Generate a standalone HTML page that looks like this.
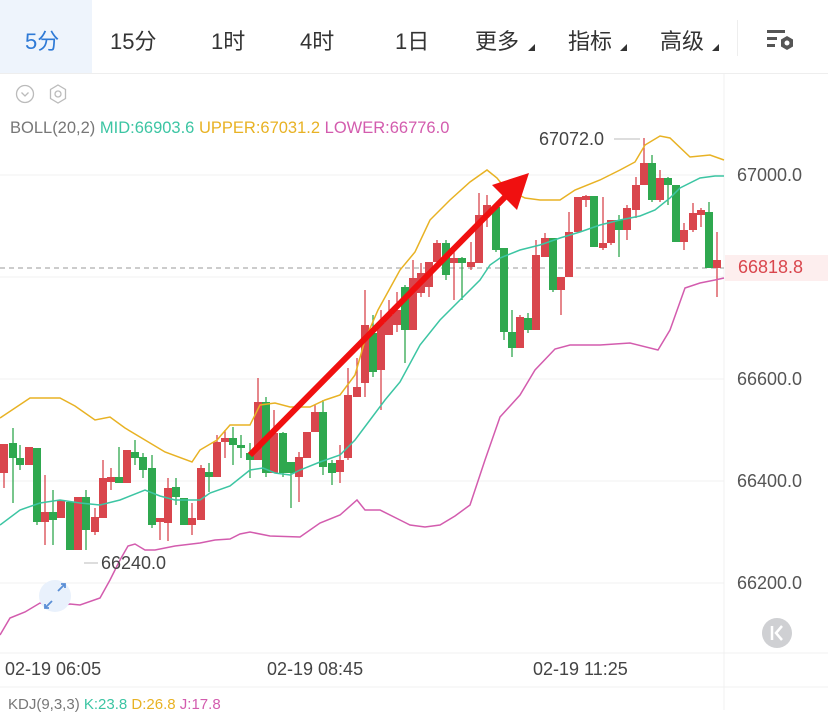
<!DOCTYPE html><html><head><meta charset="utf-8"><style>
body{margin:0;width:828px;height:710px;overflow:hidden;background:#fff;font-family:"Liberation Sans","Noto Sans CJK SC",sans-serif;position:relative}
.tab{position:absolute;top:24px;font-size:22px;color:#333}
.tri{position:absolute;width:0;height:0;border-left:7px solid transparent;border-bottom:7px solid #333}
.ax{position:absolute;font-size:18px;color:#555}
</style></head><body>
<div style="position:absolute;left:0;top:0;width:92px;height:73px;background:#eef4fc"></div>
<div style="position:absolute;left:0;top:73px;width:828px;height:1px;background:#eee"></div>
<div class="tab" style="left:25px;color:#2f7ad6">5分</div>
<div class="tab" style="left:110px">15分</div>
<div class="tab" style="left:211px">1时</div>
<div class="tab" style="left:300px">4时</div>
<div class="tab" style="left:395px">1日</div>
<div class="tab" style="left:475px">更多</div><div class="tri" style="left:528px;top:44px"></div>
<div class="tab" style="left:568px">指标</div><div class="tri" style="left:620px;top:44px"></div>
<div class="tab" style="left:660px">高级</div><div class="tri" style="left:712px;top:44px"></div>
<div style="position:absolute;left:737px;top:20px;width:1px;height:36px;background:#eee"></div>
<svg style="position:absolute;left:766px;top:28px" width="32" height="26"><g fill="#555"><rect x="1" y="2" width="18" height="3"/><rect x="1" y="9" width="10" height="3"/><rect x="1" y="16" width="8" height="3"/></g><polygon points="21,8 27,11.5 27,18.5 21,22 15,18.5 15,11.5" fill="#555"/><circle cx="21" cy="15" r="2.5" fill="#fff"/></svg>
<svg style="position:absolute;left:14px;top:84px" width="60" height="22"><circle cx="11" cy="10" r="8.5" fill="none" stroke="#bbb" stroke-width="1.3"/><path d="M7.5 8.5l3.5 3.5 3.5-3.5" fill="none" stroke="#bbb" stroke-width="1.3"/><polygon points="44,1 51.5,5.5 51.5,14.5 44,19 36.5,14.5 36.5,5.5" fill="none" stroke="#bbb" stroke-width="1.3"/><circle cx="44" cy="10" r="3" fill="none" stroke="#bbb" stroke-width="1.3"/></svg>
<div style="position:absolute;left:10px;top:119px;font-size:16.5px;white-space:nowrap"><span style="color:#777">BOLL(20,2)</span> <span style="color:#3cc5a3">MID:66903.6</span> <span style="color:#e8b224">UPPER:67031.2</span> <span style="color:#d35cae">LOWER:66776.0</span></div>
<svg style="position:absolute;left:0;top:0" width="828" height="710" id="c">
<g stroke="#f1f1f1" stroke-width="1"><line x1="0" y1="175" x2="724" y2="175"/><line x1="0" y1="277" x2="724" y2="277"/><line x1="0" y1="379" x2="724" y2="379"/><line x1="0" y1="481" x2="724" y2="481"/><line x1="0" y1="583" x2="724" y2="583"/><line x1="0" y1="653" x2="828" y2="653"/><line x1="0" y1="687" x2="828" y2="687"/><line x1="724" y1="74" x2="724" y2="710"/></g>
<line x1="0" y1="268" x2="724" y2="268" stroke="#999" stroke-dasharray="5,4"/>
<g id="k"></g>
<polyline fill="none" stroke="#e8b224" stroke-width="1.5" points="0,418 30,398 60,398 75,406 95,420 110,417 125,428 145,440 165,452 192,462 200,450 217,440 230,425 250,425 260,405 275,403 290,407 310,407 325,400 340,395 355,375 365,340 378,310 400,270 415,252 430,220 450,200 470,182 487,170 497,178 505,188 525,198 540,200 560,200 575,190 600,180 620,170 635,162 645,145 660,136 670,138 690,157 710,155 724,160"/>
<polyline fill="none" stroke="#3cc5a3" stroke-width="1.5" points="0,525 20,510 40,503 60,500 80,503 100,505 120,500 145,490 160,496 175,500 200,500 210,493 230,486 250,470 263,468 275,473 290,475 300,470 320,462 340,455 355,440 370,420 385,400 400,382 420,345 440,320 460,300 480,280 490,265 500,258 520,250 540,245 560,238 580,232 600,225 620,220 640,216 655,210 670,198 680,188 700,178 715,176 724,176"/>
<polyline fill="none" stroke="#d35cae" stroke-width="1.5" points="0,635 10,618 25,612 40,603 55,607 70,604 80,605 100,598 110,580 120,560 128,546 135,544 145,550 155,550 175,546 200,543 215,540 230,539 240,534 250,532 270,536 300,537 320,523 340,515 357,500 365,510 380,510 400,520 410,525 425,527 440,525 455,516 470,505 485,460 500,417 520,395 535,370 555,349 570,345 600,345 630,343 658,350 670,330 685,288 700,283 715,280 724,278"/>
<line x1="250" y1="455" x2="505" y2="197" stroke="#f01010" stroke-width="6"/>
<polygon points="529,173 492,185 517,210" fill="#f01010"/>
<line x1="84" y1="563" x2="98" y2="563" stroke="#bbb"/>
<line x1="614" y1="139" x2="640" y2="139" stroke="#bbb"/>
<circle cx="55" cy="596" r="16" fill="#e9f1fc"/>
<path d="M58 591l7-7M61 584h4v4M52 601l-7 7M45 604v4h4" stroke="#5b8fd6" stroke-width="1.8" fill="none"/>
<circle cx="777" cy="633" r="15" fill="#cfd0d3"/>
<path d="M772 626v14M782 626l-6 7 6 7" stroke="#fff" stroke-width="2.5" fill="none"/>
<rect x="725" y="255" width="103" height="26" fill="#fdeeee"/>
</svg>
<div class="ax" style="left:101px;top:553px;color:#444">66240.0</div>
<div class="ax" style="left:539px;top:129px;color:#444">67072.0</div>
<div class="ax" style="left:737px;top:165px">67000.0</div>
<div class="ax" style="left:738px;top:257px;color:#d9464d">66818.8</div>
<div class="ax" style="left:737px;top:369px">66600.0</div>
<div class="ax" style="left:737px;top:471px">66400.0</div>
<div class="ax" style="left:737px;top:573px">66200.0</div>
<div class="ax" style="left:5px;top:659px;color:#444">02-19 06:05</div>
<div class="ax" style="left:267px;top:659px;color:#444">02-19 08:45</div>
<div class="ax" style="left:533px;top:659px;color:#444">02-19 11:25</div>
<div style="position:absolute;left:8px;top:696px;font-size:15px;white-space:nowrap"><span style="color:#777">KDJ(9,3,3)</span> <span style="color:#3cc5a3">K:23.8</span> <span style="color:#e8b224">D:26.8</span> <span style="color:#d35cae">J:17.8</span></div>
<script>
var d=[[4,444,473,444,488,'r'],[13,443,458,428,503,'g'],[20,458,465,445,470,'g'],[29,447,465,447,465,'r'],[37,448,522,448,525,'g'],[45,512,522,475,545,'r'],[53,512,520,490,545,'g'],[61,500,518,500,518,'r'],[70,502,550,502,550,'g'],[78,497,550,497,550,'r'],[86,497,530,490,550,'g'],[95,517,532,508,535,'r'],[103,478,518,460,518,'r'],[111,477,482,468,490,'r'],[119,477,483,447,483,'g'],[127,450,483,450,483,'r'],[135,452,458,440,465,'g'],[143,457,470,453,478,'g'],[152,468,525,455,528,'g'],[160,518,522,518,540,'r'],[168,488,523,478,541,'r'],[176,487,497,478,505,'g'],[184,498,525,498,525,'g'],[192,518,525,503,535,'r'],[201,468,520,465,520,'r'],[209,472,477,463,492,'g'],[217,442,477,435,477,'r'],[225,438,442,430,458,'r'],[233,438,445,427,465,'g'],[241,445,448,435,458,'g'],[250,453,460,443,478,'g'],[258,402,460,378,460,'r'],[266,402,473,397,477,'g'],[274,433,473,410,473,'r'],[283,433,473,432,477,'g'],[291,462,473,462,508,'g'],[299,457,477,452,502,'r'],[307,432,458,432,458,'r'],[315,412,432,405,432,'r'],[323,412,467,400,475,'g'],[332,463,473,460,485,'g'],[340,460,472,445,483,'r'],[348,395,458,368,460,'r'],[357,387,397,358,397,'r'],[365,325,383,290,397,'r'],[373,333,372,315,377,'g'],[381,323,370,310,410,'r'],[389,315,335,300,335,'r'],[397,310,325,292,332,'r'],[405,287,330,285,363,'g'],[413,278,330,260,330,'r'],[421,273,293,263,297,'r'],[429,262,287,262,297,'r'],[437,243,262,240,262,'r'],[446,243,275,240,280,'g'],[454,258,263,250,300,'r'],[462,258,263,257,300,'g'],[471,262,267,242,270,'r'],[479,215,263,193,263,'r'],[487,205,215,195,227,'r'],[496,207,250,203,252,'g'],[504,248,332,248,340,'g'],[512,332,348,310,357,'g'],[520,317,348,315,348,'r'],[528,318,330,313,333,'g'],[536,255,330,240,330,'r'],[545,238,257,233,257,'r'],[553,238,290,238,292,'g'],[561,277,290,277,315,'r'],[569,232,277,212,277,'r'],[578,197,232,197,232,'r'],[586,196,200,195,207,'r'],[594,196,247,196,247,'g'],[603,243,248,197,250,'r'],[611,220,243,220,245,'r'],[619,220,230,215,257,'g'],[627,208,230,205,240,'r'],[636,185,210,177,218,'r'],[644,163,185,138,185,'r'],[652,163,200,155,202,'g'],[660,178,200,170,202,'r'],[668,178,185,177,205,'g'],[676,185,242,185,242,'g'],[684,230,242,223,250,'r'],[693,213,230,203,232,'r'],[701,210,215,208,227,'r'],[709,212,268,202,268,'g'],[717,260,268,232,297,'r']];
var s='';d.forEach(function(c){var col=c[5]=='r'?'#d9464d':'#2fa84f';s+='<line x1="'+c[0]+'" y1="'+c[3]+'" x2="'+c[0]+'" y2="'+c[4]+'" stroke="'+col+'" stroke-width="1.3"/><rect x="'+(c[0]-4)+'" y="'+c[1]+'" width="8" height="'+Math.max(2,c[2]-c[1])+'" fill="'+col+'"/>';});
document.getElementById('k').innerHTML=s;
</script>
</body></html>
